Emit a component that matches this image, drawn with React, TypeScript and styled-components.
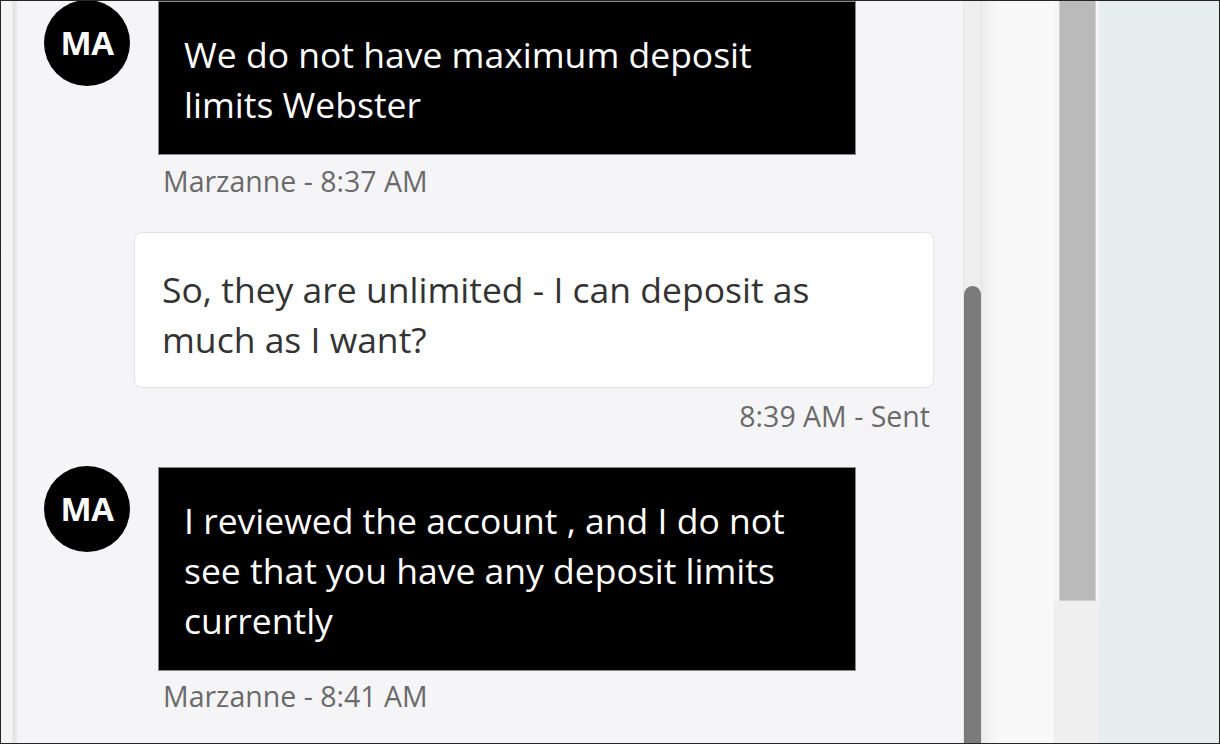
import React from "react";
import styled, { createGlobalStyle } from "styled-components";

const Global = createGlobalStyle`
  html, body { margin: 0; padding: 0; overflow: hidden; background: #ffffff; }
  * { box-sizing: border-box; }
`;

const Frame = styled.div`
  width: 1220px;
  height: 744px;
  border: 1px solid #262626;
  display: flex;
  overflow: hidden;
  font-family: "Open Sans", "Noto Sans", sans-serif;
`;

const LeftEdge = styled.div`
  width: 16px;
  flex: none;
  background: linear-gradient(
    to right,
    #f6f6f6 0,
    #f4f4f4 11px,
    #e2e2e2 12px,
    #e6e6e6 15px,
    #ededed 16px
  );
`;

const ChatPane = styled.div`
  flex: none;
  width: 946px;
  background: #f5f5f7;
  padding: 0 29px 0 27px;
  display: flex;
  flex-direction: column;
  overflow: hidden;
`;

const ReceivedRow = styled.div<{ $top: number }>`
  display: flex;
  align-items: flex-start;
  gap: 28px;
  margin-top: ${(p) => p.$top}px;
`;

const Avatar = styled.div`
  width: 86px;
  height: 86px;
  flex: none;
  border-radius: 50%;
  background: #000;
  color: #fff;
  display: flex;
  align-items: center;
  justify-content: center;
  font-weight: 700;
  font-size: 33px;
  letter-spacing: -0.5px;
  margin-top: -1px;
  padding-bottom: 2px;
`;

const DarkBubble = styled.div`
  width: 698px;
  background: #000;
  border: 1px solid #8a8a8a;
  color: #fff;
  font-size: 35.5px;
  line-height: 50px;
  padding: 27px 20px 25px 25px;
  white-space: nowrap;
`;

const Meta = styled.div<{ $top: number; $align?: "left" | "right" }>`
  margin-top: ${(p) => p.$top}px;
  color: #6a6a6a;
  font-size: 28.5px;
  line-height: 36px;
  text-align: ${(p) => p.$align ?? "left"};
  padding-left: ${(p) => (p.$align === "right" ? 0 : 119)}px;
  padding-right: ${(p) => (p.$align === "right" ? 4 : 0)}px;
`;

const SentBubble = styled.div<{ $top: number }>`
  align-self: flex-end;
  margin-top: ${(p) => p.$top}px;
  width: 800px;
  background: #ffffff;
  border: 1px solid #e2e2e4;
  border-radius: 8px;
  color: #333333;
  font-size: 35.5px;
  line-height: 50px;
  padding: 31px 20px 23px 27px;
  white-space: nowrap;
`;

const Track = styled.div`
  position: relative;
  flex: none;
  width: 19px;
  background: #eeeeee;
  border-left: 1px solid #e6e6e6;
  border-right: 1px solid #e3e3e3;
`;

const Thumb = styled.div`
  position: absolute;
  left: 0;
  right: 0;
  top: 285px;
  bottom: 0;
  background: #7b7b7b;
  border-radius: 9px 9px 0 0;
`;

const Gutter = styled.div`
  flex: none;
  width: 72px;
  background: linear-gradient(to right, #ececec 0, #f4f4f4 8px, #f9f9f9 18px, #f9f9f9 100%);
`;

const OuterTrack = styled.div`
  flex: none;
  width: 45px;
  display: flex;
  flex-direction: column;
  background: #efefef;
`;

const OuterThumbRow = styled.div`
  height: 600px;
  display: flex;
  justify-content: center;
  background: #f6f6f6;
`;

const OuterThumb = styled.div`
  width: 37px;
  margin-left: 1px;
  background: #bababa;
  border: 1px solid #cfcfcf;
  border-top: none;
`;

const RightPanel = styled.div`
  flex: 1;
  background: #e7eeee;
`;

export default function App() {
  return (
    <>
      <Global />
      <Frame>
        <LeftEdge />
        <ChatPane>
          <ReceivedRow $top={0}>
            <Avatar>MA</Avatar>
            <DarkBubble>
              We do not have maximum deposit
              <br />
              limits Webster
            </DarkBubble>
          </ReceivedRow>
          <Meta $top={8}>Marzanne - 8:37 AM</Meta>
          <SentBubble $top={33}>
            So, they are unlimited - I can deposit as
            <br />
            much as I want?
          </SentBubble>
          <Meta $top={10} $align="right">
            8:39 AM - Sent
          </Meta>
          <ReceivedRow $top={33}>
            <Avatar>MA</Avatar>
            <DarkBubble>
              I reviewed the account , and I do not
              <br />
              see that you have any deposit limits
              <br />
              currently
            </DarkBubble>
          </ReceivedRow>
          <Meta $top={7}>Marzanne - 8:41 AM</Meta>
        </ChatPane>
        <Track>
          <Thumb />
        </Track>
        <Gutter />
        <OuterTrack>
          <OuterThumbRow>
            <OuterThumb />
          </OuterThumbRow>
        </OuterTrack>
        <RightPanel />
      </Frame>
    </>
  );
}
